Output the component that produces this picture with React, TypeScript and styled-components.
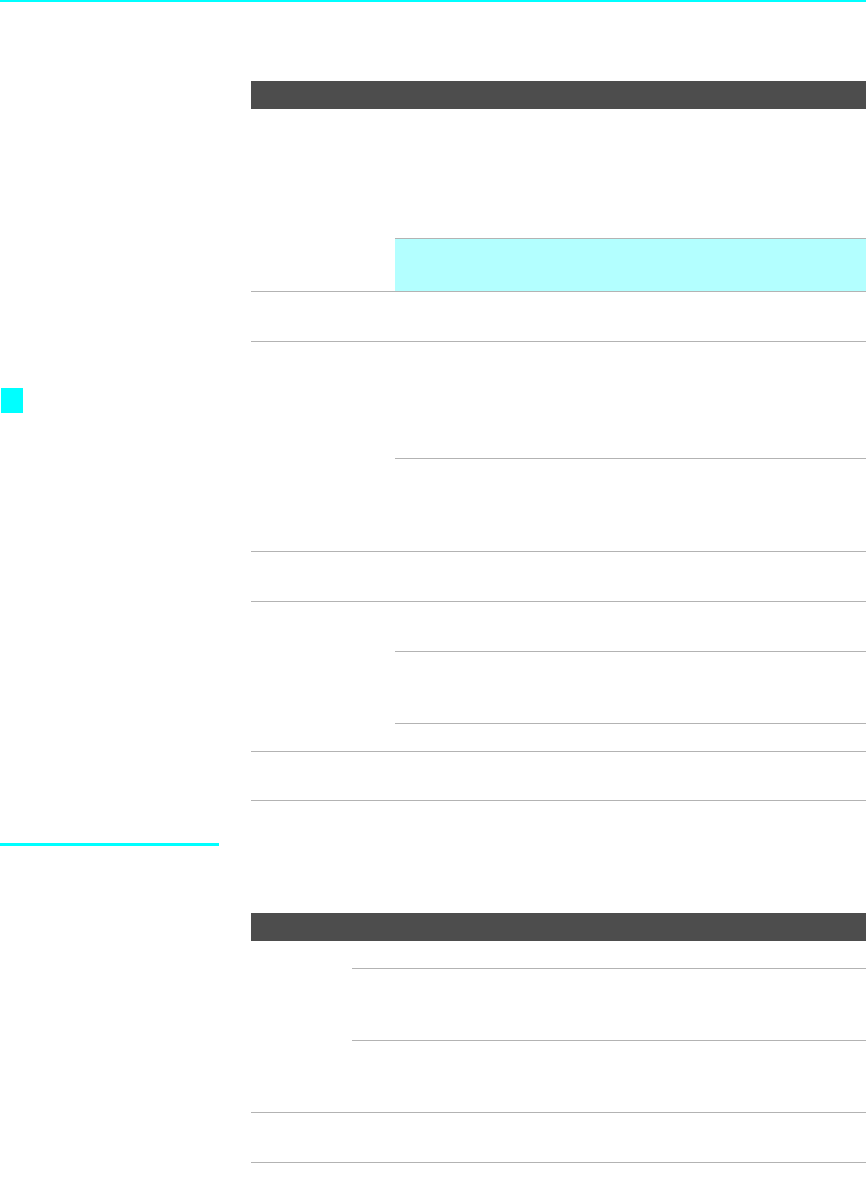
import React from 'react';
import styled, { createGlobalStyle } from 'styled-components';

const GlobalStyle = createGlobalStyle`
  html, body {
    margin: 0;
    padding: 0;
    background: #ffffff;
    font-family: "Liberation Sans", Arial, sans-serif;
  }
`;

const LINE = '#b3b3b3';
const CYAN = '#00ffff';

const Page = styled.div`
  width: 866px;
  min-height: 1179px;
  background: #fff;
`;

const TopRule = styled.div`
  height: 2px;
  background: ${CYAN};
`;

const Section = styled.section<{ $gap: number }>`
  display: grid;
  grid-template-columns: 251px 1fr;
  margin-top: ${(p) => p.$gap}px;
`;

const Margin = styled.aside`
  display: flex;
  flex-direction: column;
  align-items: flex-start;
`;

const Marker = styled.div<{ $top: number }>`
  width: 22px;
  height: 25px;
  margin: ${(p) => p.$top}px 0 0 1px;
  background: ${CYAN};
`;

const SideRule = styled.div`
  width: 219px;
  height: 3px;
  background: ${CYAN};
`;

const Table = styled.div<{ $top: number }>`
  display: flex;
  flex-direction: column;
  margin-top: ${(p) => p.$top}px;
  border-bottom: 1px solid ${LINE};
`;

const HeadBar = styled.div`
  height: 28px;
  background: #4d4d4d;
`;

const Row = styled.div<{ $first: number; $lined: boolean }>`
  display: grid;
  grid-template-columns: ${(p) => p.$first}px 1fr;
  border-top: ${(p) => (p.$lined ? `1px solid ${LINE}` : 'none')};
`;

const Label = styled.div``;

const Stack = styled.div`
  display: flex;
  flex-direction: column;
`;

const Cell = styled.div<{ $h: number; $lined: boolean; $hl?: boolean }>`
  box-sizing: border-box;
  height: ${(p) => p.$h}px;
  border-top: ${(p) => (p.$lined ? `1px solid ${LINE}` : 'none')};
  background: ${(p) => (p.$hl ? '#b3ffff' : 'transparent')};
`;

type Sub = { h: number; hl?: boolean };
type RowSpec = { lined: boolean; subs: Sub[] };

const tableOne: RowSpec[] = [
  { lined: false, subs: [{ h: 129 }, { h: 53, hl: true }] },
  { lined: true, subs: [{ h: 49 }] },
  { lined: true, subs: [{ h: 116 }, { h: 93 }] },
  { lined: true, subs: [{ h: 49 }] },
  { lined: true, subs: [{ h: 49 }, { h: 72 }, { h: 28 }] },
  { lined: true, subs: [{ h: 48 }] },
];

const tableTwo: RowSpec[] = [
  { lined: false, subs: [{ h: 27 }, { h: 72 }, { h: 72 }] },
  { lined: true, subs: [{ h: 49 }] },
];

const SpecTable = ({ rows, first, top }: { rows: RowSpec[]; first: number; top: number }) => (
  <Table $top={top}>
    <HeadBar />
    {rows.map((row, i) => (
      <Row key={i} $first={first} $lined={row.lined}>
        <Label />
        <Stack>
          {row.subs.map((s, j) => (
            <Cell key={j} $h={s.h} $lined={j > 0} $hl={s.hl} />
          ))}
        </Stack>
      </Row>
    ))}
  </Table>
);

const App = () => (
  <Page>
    <GlobalStyle />
    <TopRule />
    <Section $gap={0}>
      <Margin>
        <Marker $top={386} />
      </Margin>
      <SpecTable rows={tableOne} first={144} top={79} />
    </Section>
    <Section $gap={42}>
      <Margin>
        <SideRule />
      </Margin>
      <SpecTable rows={tableTwo} first={101} top={70} />
    </Section>
  </Page>
);

export default App;
